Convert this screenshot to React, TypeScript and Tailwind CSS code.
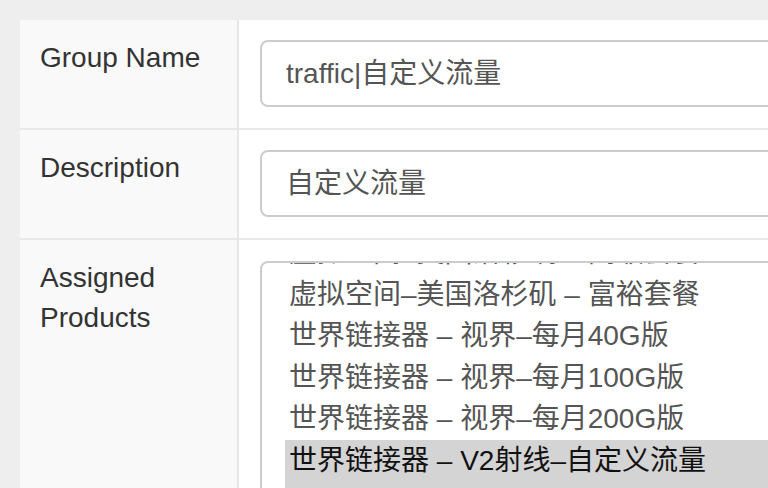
const FONT = "font-['Liberation_Sans','Noto_Sans_CJK_SC',sans-serif]";

const PRODUCTS: { name: string; selected?: boolean }[] = [
  { name: "虚拟空间–美国洛杉矶 – 高级套餐" },
  { name: "虚拟空间–美国洛杉矶 – 富裕套餐" },
  { name: "世界链接器 – 视界–每月40G版" },
  { name: "世界链接器 – 视界–每月100G版" },
  { name: "世界链接器 – 视界–每月200G版" },
  { name: "世界链接器 – V2射线–自定义流量", selected: true },
];

function Row({
  label,
  last,
  children,
}: {
  label: string;
  last?: boolean;
  children: React.ReactNode;
}) {
  return (
    <div
      className={[
        "flex",
        last ? "h-[260px]" : "h-[110px] border-b-2 border-[#e8e8e8]",
      ].join(" ")}
    >
      <div className="w-[219px] shrink-0 bg-[#f9f9f9] border-r-2 border-[#e8e8e8] pl-5 pr-5 pt-[18px] text-[28px] leading-[40px] text-[#333]">
        {label}
      </div>
      <div className="flex-1 pl-[21px]">{children}</div>
    </div>
  );
}

function TextField({ value }: { value: string }) {
  return (
    <div className="mt-5 h-[67px] w-[560px] rounded-[8px] border-2 border-[#cccccc] bg-white pl-6 flex items-center text-[28px] text-[#555] whitespace-nowrap">
      {value}
    </div>
  );
}

export default function App() {
  return (
    <div
      className={`w-[768px] h-[488px] overflow-hidden bg-[#eeeeee] pl-5 pt-5 ${FONT}`}
    >
      <div className="w-[900px] bg-white">
        <Row label="Group Name">
          <TextField value="traffic|自定义流量" />
        </Row>
        <Row label="Description">
          <TextField value="自定义流量" />
        </Row>
        <Row label="Assigned Products" last>
          <div className="mt-[21px] h-[240px] w-[560px] rounded-t-[8px] border-2 border-b-0 border-[#cccccc] overflow-hidden pl-[23px]">
            <div className="-mt-[31px]">
              {PRODUCTS.map((p) => (
                <div
                  key={p.name}
                  className={[
                    "h-[41.6px] leading-[41.6px] pl-1 text-[28px] whitespace-nowrap",
                    p.selected
                      ? "bg-[#d4d4d4] text-[#111] h-[60px]"
                      : "text-[#555]",
                  ].join(" ")}
                >
                  {p.name}
                </div>
              ))}
            </div>
          </div>
        </Row>
      </div>
    </div>
  );
}
